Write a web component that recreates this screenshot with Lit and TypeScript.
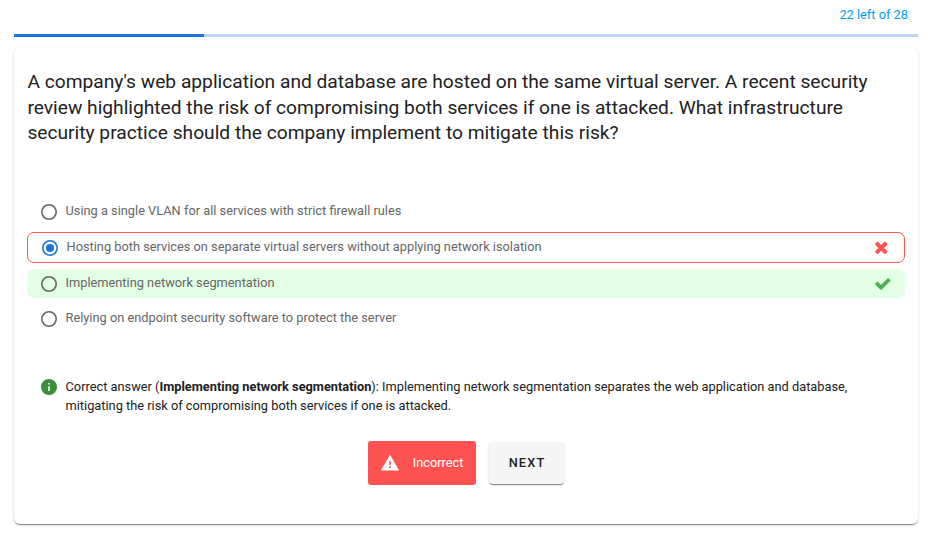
import { LitElement, html, css, svg, nothing } from "lit";
import { customElement, property } from "lit/decorators.js";
import { classMap } from "lit/directives/class-map.js";

type Mark = "none" | "wrong" | "right";

@customElement("answer-option")
class AnswerOption extends LitElement {
  @property() label = "";
  @property() mark: Mark = "none";
  @property({ type: Boolean }) selected = false;

  static styles = css`
    :host { display: block; }
    .row {
      box-sizing: border-box;
      height: 29px;
      display: flex;
      align-items: center;
      padding: 0 14px;
      border-radius: 7px;
      color: #666;
    }
    .wrong { height: 31px; border: 1px solid #f85252; padding-right: 13.5px; }
    .right { background: #e3ffe5; }
    .radio { width: 16px; height: 16px; flex: none; fill: #666; margin-top: 1px; }
    .selected .radio { fill: #1976d2; }
    .text {
      flex: 1;
      margin: -1px 0 0 8.5px;
      font-size: 12.8px;
      line-height: 19px;
      white-space: nowrap;
    }
    .icon { width: 17.5px; height: 17.5px; flex: none; }
    .wrong .icon { width: 18.5px; height: 18.5px; fill: #ff5252; }
    .right .icon { fill: #4caf50; }
  `;

  render() {
    const ring = "M12,20A8,8 0 0,1 4,12A8,8 0 0,1 12,4A8,8 0 0,1 20,12A8,8 0 0,1 12,20M12,2A10,10 0 0,0 2,12A10,10 0 0,0 12,22A10,10 0 0,0 22,12A10,10 0 0,0 12,2Z";
    const cross = "M1490 1322q0 40-28 68l-136 136q-28 28-68 28t-68-28l-294-294-294 294q-28 28-68 28t-68-28l-136-136q-28-28-28-68t28-68l294-294-294-294q-28-28-28-68t28-68l136-136q28-28 68-28t68 28l294 294 294-294q28-28 68-28t68 28l136 136q28 28 28 68t-28 68l-294 294 294 294q28 28 28 68z";
    const check = "M1671 566q0 40-28 68l-724 724-136 136q-28 28-68 28t-68-28l-136-136-362-362q-28-28-28-68t28-68l136-136q28-28 68-28t68 28l294 295 656-657q28-28 68-28t68 28l136 136q28 28 28 68z";
    return html`
      <div class=${classMap({ row: true, [this.mark]: true, selected: this.selected })}>
        <svg class="radio" viewBox="2 2 20 20">
          <path d=${ring} />
          ${this.selected ? svg`<circle cx="12" cy="12" r="5" />` : nothing}
        </svg>
        <span class="text">${this.label}</span>
        ${this.mark === "none"
          ? nothing
          : html`<svg class="icon" viewBox="0 0 1792 1792"><path d=${this.mark === "wrong" ? cross : check} /></svg>`}
      </div>
    `;
  }
}

@customElement("app-root")
class AppRoot extends LitElement {
  @property({ type: Number }) total = 28;
  @property({ type: Number }) left = 22;

  static styles = css`
    :host {
      display: block;
      box-sizing: border-box;
      height: 544px;
      padding: 0 23px 0 14px;
      overflow: hidden;
      background: #fff;
      color: #212121;
      font-family: Roboto, sans-serif;
      font-size: 12.8px;
    }
    .counter {
      height: 34px;
      box-sizing: border-box;
      padding: 5px 10px 0 0;
      text-align: right;
      line-height: 20px;
      color: #03a0f0;
    }
    .track { height: 3px; background: #bad6f2; }
    .bar { height: 3px; background: #1976d2; }
    .card {
      box-sizing: border-box;
      height: 477px;
      margin-top: 10px;
      padding: 22px 13px 0;
      border-radius: 6px;
      background: #fff;
      box-shadow: 0 2px 1px -1px rgba(0, 0, 0, .3), 0 1px 1px rgba(0, 0, 0, .18), 0 1px 3px rgba(0, 0, 0, .14);
    }
    h1 {
      margin: 0 0 0 .4px;
      font-size: 19.2px;
      font-weight: 400;
      line-height: 25.6px;
      white-space: nowrap;
    }
    .options { margin-top: 51px; display: grid; gap: 6px; }
    .explain { display: flex; margin-top: 44px; padding-left: 14px; }
    .explain svg { width: 16px; height: 16px; flex: none; margin-top: 2px; }
    .info { fill: #388e3c; }
    .explain p { margin: 0 0 0 8.5px; line-height: 19.2px; font-size: 12.8px; white-space: nowrap; }
    .explain b { font-weight: 700; }
    .actions { display: flex; gap: 13px; padding-right: 1px; justify-content: center; margin-top: 26px; }
    .status {
      box-sizing: border-box;
      width: 108px;
      height: 44px;
      padding: 0 12px;
      display: flex;
      align-items: center;
      justify-content: space-between;
      border-radius: 3px;
      background: #ff5252;
      color: #fff;
    }
    .status span { margin-bottom: 2px; }
    .status svg { width: 20px; height: 20px; fill: #fff; }
    .next {
      width: 75px;
      height: 42px;
      margin-top: 1px;
      padding: 0 0 2px 2px;
      border: 0;
      border-radius: 4px;
      background: #f5f5f5;
      color: #212121;
      font: 500 12.8px Roboto, sans-serif;
      letter-spacing: 1.14px;
      box-shadow: 0 2px 1px -1px rgba(0, 0, 0, .3), 0 1px 1px rgba(0, 0, 0, .18), 0 1px 3px rgba(0, 0, 0, .14);
    }
  `;

  render() {
    return html`
      <div class="counter">${this.left} left of ${this.total}</div>
      <div class="track"><div class="bar" style="width:21%"></div></div>
      <main class="card">
        <h1>A company's web application and database are hosted on the same virtual server. A recent security<br />review highlighted the risk of compromising both services if one is attacked. What infrastructure<br />security practice should the company implement to mitigate this risk?</h1>
        <div class="options">
          <answer-option label="Using a single VLAN for all services with strict firewall rules"></answer-option>
          <answer-option selected mark="wrong" label="Hosting both services on separate virtual servers without applying network isolation"></answer-option>
          <answer-option mark="right" label="Implementing network segmentation"></answer-option>
          <answer-option label="Relying on endpoint security software to protect the server"></answer-option>
        </div>
        <div class="explain">
          <svg class="info" viewBox="2 2 20 20"><path d="M13,9H11V7H13M13,17H11V11H13M12,2A10,10 0 0,0 2,12A10,10 0 0,0 12,22A10,10 0 0,0 22,12A10,10 0 0,0 12,2Z" /></svg>
          <p>Correct answer (<b>Implementing network segmentation</b>): Implementing network segmentation separates the web application and database,<br />mitigating the risk of compromising both services if one is attacked.</p>
        </div>
        <div class="actions">
          <div class="status">
            <svg viewBox="0 0 24 24"><path d="M13,14H11V10H13M13,18H11V16H13M1,21H23L12,2L1,21Z" /></svg>
            <span>Incorrect</span>
          </div>
          <button class="next">NEXT</button>
        </div>
      </main>
    `;
  }
}
